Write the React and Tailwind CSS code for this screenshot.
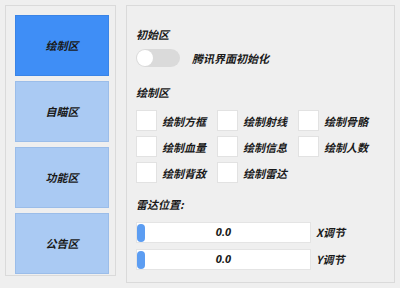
import React from "react";

const font = { fontFamily: '"Noto Sans CJK SC", "Noto Sans", sans-serif' };

function NavButton({ label, active }) {
  return (
    <div
      className={
        "h-[61px] w-[94px] flex items-center justify-center border text-[11px] font-bold italic text-[#1a1a1a] " +
        (active ? "bg-[#3f8ef6] border-[#3a84e6]" : "bg-[#aacaf3] border-[#9bbde9]")
      }
    >
      {label}
    </div>
  );
}

function Check({ label }) {
  return (
    <div className="flex items-center gap-[5px] h-[21px]">
      <div className="w-[21px] h-[21px] bg-white border border-[#e2e2e2] shrink-0" />
      <span className="text-[11px] leading-[14px] font-bold italic text-[#1a1a1a] whitespace-nowrap">{label}</span>
    </div>
  );
}

function Slider({ label }) {
  return (
    <div className="flex items-center h-[21px]">
      <div className="relative w-[175px] h-[21px] bg-white border border-[#e4e4e4] flex items-center justify-center">
        <div className="absolute left-[0px] top-[1px] w-[8px] h-[18px] rounded-[4px] bg-[#5c9df2]" />
        <span className="text-[11px] font-bold italic text-[#1a1a1a]" style={{ fontFamily: '"Noto Sans", "Noto Sans CJK SC", sans-serif' }}>0.0</span>
      </div>
      <span className="ml-[5px] text-[11px] font-bold italic text-[#1a1a1a]">{label}</span>
    </div>
  );
}

export default function App() {
  return (
    <div className="w-[400px] h-[288px] bg-[#efefef] flex items-start p-[5px] gap-[10px]" style={font}>
      <div className="w-[111px] h-[271px] border border-[#dadada] pl-[9px] pr-[6px] pt-[9px] flex flex-col gap-[5px]">
        <NavButton label="绘制区" active />
        <NavButton label="自瞄区" />
        <NavButton label="功能区" />
        <NavButton label="公告区" />
      </div>
      <div className="w-[270px] h-[278px] border border-[#dadada] pl-[9px] pt-[21px] flex flex-col">
        <div className="text-[11px] leading-[14px] font-bold italic text-[#1a1a1a]">初始区</div>
        <div className="mt-[8px] flex items-center">
          <div className="w-[44px] h-[18px] rounded-full bg-[#dadada] flex items-center pl-[1px]">
            <div className="w-[16px] h-[16px] rounded-full bg-white" />
          </div>
          <span className="ml-[12px] text-[11px] leading-[14px] font-bold italic text-[#1a1a1a]">腾讯界面初始化</span>
        </div>
        <div className="mt-[18px] text-[11px] leading-[14px] font-bold italic text-[#1a1a1a]">绘制区</div>
        <div className="mt-[11px] grid grid-cols-[81px_81px_81px] gap-y-[5px]">
          <Check label="绘制方框" />
          <Check label="绘制射线" />
          <Check label="绘制骨骼" />
          <Check label="绘制血量" />
          <Check label="绘制信息" />
          <Check label="绘制人数" />
          <Check label="绘制背敌" />
          <Check label="绘制雷达" />
        </div>
        <div className="mt-[14px] text-[11px] leading-[14px] font-bold italic text-[#1a1a1a]">雷达位置:</div>
        <div className="mt-[11px] flex flex-col gap-[6px]">
          <Slider label="X调节" />
          <Slider label="Y调节" />
        </div>
      </div>
    </div>
  );
}
